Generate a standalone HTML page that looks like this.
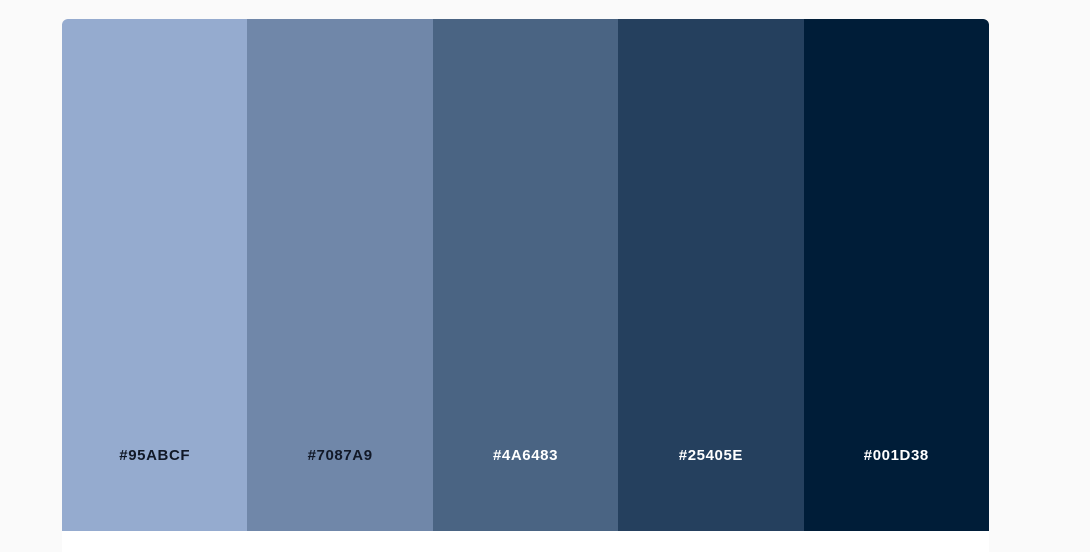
<!DOCTYPE html>
<html><head><style>
html,body{margin:0;padding:0;width:1090px;height:552px;background:#fafafa;overflow:hidden;font-family:"Liberation Sans",sans-serif}
.card{position:absolute;left:62px;top:19px;width:927px;height:533px;background:#fff;border-radius:6px 6px 0 0;overflow:hidden}
.row{display:flex;height:512px}
.s{flex:1;position:relative}
.s span{position:absolute;left:0;right:0;top:428px;text-align:center;font-weight:bold;font-size:15px;letter-spacing:0.6px}
</style></head><body>
<div class="card"><div class="row">
<div class="s" style="background:#95ABCF"><span style="color:#111827">#95ABCF</span></div>
<div class="s" style="background:#7087A9"><span style="color:#111827">#7087A9</span></div>
<div class="s" style="background:#4A6483"><span style="color:#fff">#4A6483</span></div>
<div class="s" style="background:#25405E"><span style="color:#fff">#25405E</span></div>
<div class="s" style="background:#001D38"><span style="color:#fff">#001D38</span></div>
</div></div>
</body></html>
